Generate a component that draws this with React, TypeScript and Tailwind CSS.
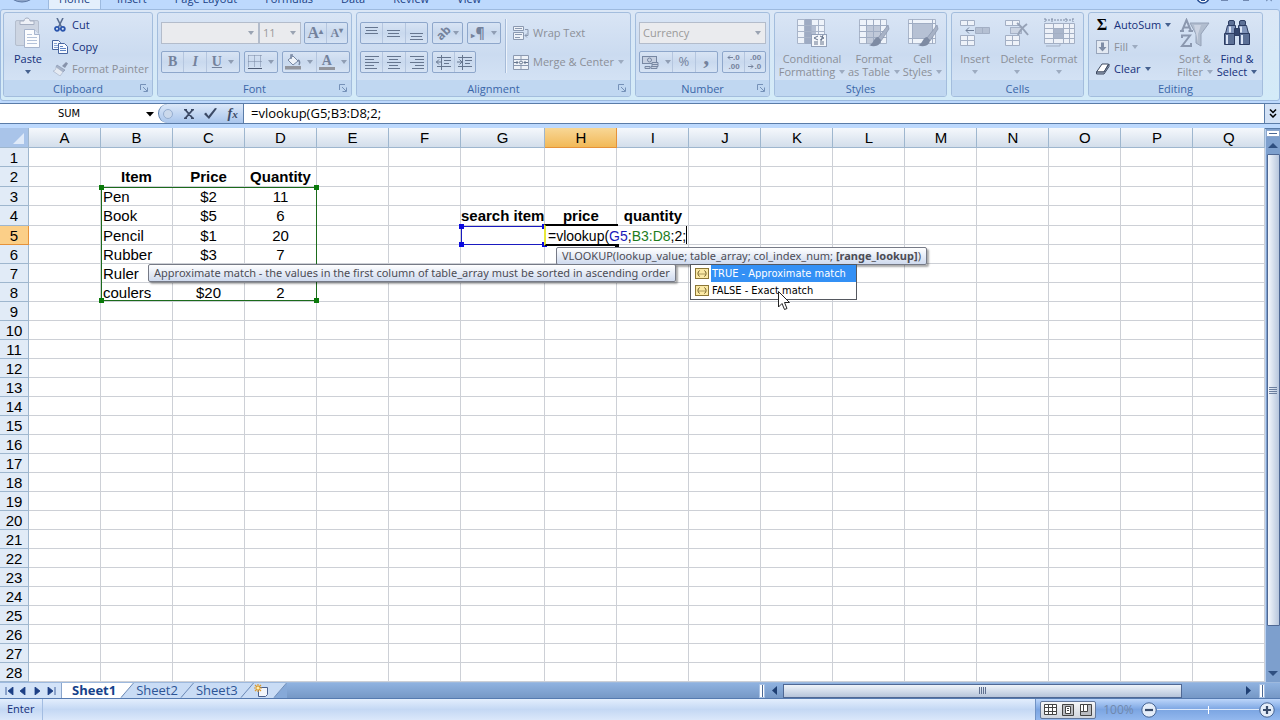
import type { ReactNode } from "react"
import clsx from "clsx"

const tabs = ["Insert", "Page Layout", "Formulas", "Data", "Review", "View"]

const columns = "ABCDEFGHIJKLMNOPQ".split("")

// every row is 19px high except these
const tallRows = [2, 4]

const cells: Record<string, { text: string; style: string }> = {
    B2: { text: "Item", style: "text-center font-bold" },
    C2: { text: "Price", style: "text-center font-bold" },
    D2: { text: "Quantity", style: "text-center font-bold" },
    B3: { text: "Pen", style: "pl-0.5" },
    C3: { text: "$2", style: "text-center" },
    D3: { text: "11", style: "text-center" },
    B4: { text: "Book", style: "pl-0.5" },
    C4: { text: "$5", style: "text-center" },
    D4: { text: "6", style: "text-center" },
    B5: { text: "Pencil", style: "pl-0.5" },
    C5: { text: "$1", style: "text-center" },
    D5: { text: "20", style: "text-center" },
    B6: { text: "Rubber", style: "pl-0.5" },
    C6: { text: "$3", style: "text-center" },
    D6: { text: "7", style: "text-center" },
    B7: { text: "Ruler", style: "pl-0.5" },
    B8: { text: "coulers", style: "pl-0.5" },
    C8: { text: "$20", style: "text-center" },
    D8: { text: "2", style: "text-center" },
    G4: { text: "search item", style: "text-center font-bold" },
    H4: { text: "price", style: "text-center font-bold" },
    I4: { text: "quantity", style: "text-center font-bold" },
}

const Arrow = ({ className = "text-[#8f9db3]" }: { className?: string }) => (
    <svg width="6" height="4" viewBox="0 0 6 4" className={clsx("shrink-0", className)}>
        <path d="M0 0h6L3 4z" fill="currentColor" />
    </svg>
)

const Group = ({ title, width, launcher, children }: { title: string; width: string; launcher?: boolean; children: ReactNode }) => (
    <section className={clsx("flex shrink-0 flex-col overflow-hidden rounded-[3px] border border-[#a3bddd] bg-linear-to-b from-[#d9e5f5] via-[#cbdbf0] to-[#d8e6f7]", width)}>
        <div className="min-h-0 flex-1">{children}</div>
        <div className="relative h-4 bg-[#c0d7f1] text-center leading-[17px] text-[#3a66a8]">
            {title}
            {launcher && (
                <button aria-label={title + " options"} className="absolute top-1 right-1">
                    <svg width="8" height="8" viewBox="0 0 8 8" fill="none" stroke="#7591b8">
                        <path d="M.5 6V.5H6M3 3l4 4M7.5 3.500v4h-4" />
                    </svg>
                </button>
            )}
        </div>
    </section>
)

const Box = ({ width, children }: { width: string; children: ReactNode }) => (
    <div className={clsx("flex h-[22px] shrink-0 divide-x divide-[#b5c6df] overflow-hidden rounded-[2px] border border-[#8ea7cb] bg-linear-to-b from-[#d8e4f4] via-[#c9d9ee] to-[#d6e3f4]", width)}>{children}</div>
)

const Tool = ({ label, wide, children }: { label: string; wide?: boolean; children: ReactNode }) => (
    <button aria-label={label} className={clsx("flex h-full items-center justify-center gap-1.5 text-[#74829c]", wide ? "flex-[1.5]" : "flex-1")}>{children}</button>
)

const Combo = ({ label, value, width }: { label: string; value: string; width: string }) => (
    <div className={clsx("relative h-[22px] shrink-0 border border-[#b3bccb] bg-[#eaebee]", width)}>
        <select aria-label={label} className="block h-full w-full appearance-none pl-[3px] leading-5 text-[#9a9a9a]">
            <option>{value}</option>
        </select>
        <span className="pointer-events-none absolute top-2 right-1"><Arrow className="text-[#9aa3b2]" /></span>
    </div>
)

const Big = ({ icon, top, bottom, width, active }: { icon: ReactNode; top: string; bottom?: string; width: string; active?: boolean }) => (
    <button className={clsx("flex flex-col items-center pt-1 whitespace-nowrap leading-[13px]", width, active ? "text-[#15307a]" : "text-[#8b8f98]")}>
        <span className="mb-[3px] flex h-8 items-center">{icon}</span>
        <span>{top}</span>
        <span className="flex h-[13px] items-center gap-1">
            {bottom}
            <Arrow className={active ? "text-[#46618f]" : "text-[#9dabc0]"} />
        </span>
    </button>
)

const Small = ({ icon, text, arrow, disabled }: { icon: ReactNode; text: string; arrow?: boolean; disabled?: boolean }) => (
    <button className={clsx("flex h-[22px] items-center gap-1 whitespace-nowrap", disabled ? "text-[#8b8f98]" : "text-[#15307a]")}>
        <span className="flex w-4 justify-center">{icon}</span>
        {text}
        {arrow && <Arrow className={disabled ? "text-[#9dabc0]" : "text-[#46618f]"} />}
    </button>
)

const Lines = ({ d }: { d: string }) => (
    <svg width="15" height="15" viewBox="0 0 15 15" stroke="#66768f" fill="none"><path d={d} /></svg>
)

const PasteIcon = () => (
    <svg width="28" height="32" viewBox="0 0 28 32">
        <rect x="1.500" y="3.500" width="23" height="25" rx="1.500" fill="#cdd5e2" stroke="#b4bece" />
        <path d="M6 7.500V4h4c0-4 6-4 6 0h4v3.500z" fill="#eef1f7" stroke="#a5afc2" />
        <path d="M10.500 12.500h10l5 5v13h-15z" fill="#fbfcfe" stroke="#a6b4cd" />
        <path d="M20.500 12.500v5h5" fill="#dde5f2" stroke="#a6b4cd" />
        <path d="M13 17.500h5M13 20.500h10M13 23.500h10M13 26.500h10" stroke="#b4c2d9" />
    </svg>
)

const CutIcon = () => (
    <svg width="12" height="14" viewBox="0 0 12 14" fill="none">
        <path d="M3 0l4.500 9M9 0L4.500 9" stroke="#5b6f92" strokeWidth="1.600" />
        <circle cx="3" cy="10.800" r="2" stroke="#2a55ad" strokeWidth="1.800" />
        <circle cx="8.800" cy="10.800" r="2" stroke="#2a55ad" strokeWidth="1.800" />
    </svg>
)

const CopyIcon = () => (
    <svg width="16" height="14" viewBox="0 0 16 14" stroke="#4866a0" fill="#f7faff">
        <path d="M.5.500h6l2 2v7h-8z" />
        <path d="M2 3.500h3M2 5.500h4M2 7.500h4" stroke="#8aa5d4" />
        <path d="M6.500 3.500h6l3 3v7h-9z" />
        <path d="M8 6.500h3M8 8.500h6M8 10.500h6" stroke="#5f84c4" />
    </svg>
)

const PainterIcon = () => (
    <svg width="15" height="14" viewBox="0 0 15 14">
        <path d="M9 4l4-4 2 1.500L12 6z" fill="#8793ab" />
        <path d="M4 3l8 5-2 2-7-5z" fill="#a8b4c9" stroke="#8492ac" strokeWidth=".6" />
        <path d="M3 5l7 5-3 4-7-5c2 0 3-2 3-4z" fill="#e5eaf2" stroke="#a9b5ca" strokeWidth=".7" />
    </svg>
)

const SheetGrid = ({ children }: { children?: ReactNode }) => (
    <svg width="32" height="30" viewBox="0 0 32 30">
        <path d="M1.500 1.500h27v24h-27z" fill="#eef3fa" stroke="#a9b5c9" />
        {children}
    </svg>
)

const Brush = () => (
    <>
        <path d="M30 7L20 20l3 3 8-12z" fill="#a7b2c6" stroke="#8592aa" strokeWidth=".7" />
        <path d="M20 19c-5 1-4 7-9 8 6 3 12 0 12-5z" fill="#7e8ba3" />
    </>
)

const ConditionalIcon = () => (
    <SheetGrid>
        <path d="M8 1h7v25H8z" fill="#9eabc3" />
        <path d="M15 7h5v12h-5z" fill="#b3bed2" />
        <path d="M1 7.500h28M1 13.500h28M1 19.500h28M8.500 1v25M15.500 1v25M22.500 1v25" stroke="#a9b5c9" />
        <rect x="15.500" y="16.500" width="15" height="12" fill="#f4f7fb" stroke="#92a0b8" />
        <path d="M22 18l-4 2 4 2M18 24h4M18 26h4M24 18l4 2-4 2M24 24h4M24 26h4M27 17l-2 6" stroke="#66748d" fill="none" />
    </SheetGrid>
)

const TableIcon = () => (
    <SheetGrid>
        <path d="M8 7h14v18H8z" fill="#c0c9d9" />
        <path d="M1 7.500h28M1 13.500h28M1 19.500h28M8.500 1v25M15.500 1v25M22.500 1v25" stroke="#a0adc3" fill="none" />
        <Brush />
    </SheetGrid>
)

const StylesIcon = () => (
    <SheetGrid>
        <path d="M5 5h20v15H5z" fill="#b6c1d4" />
        <path d="M1 5.500h28M1 20.500h28M5.500 1v25M25.500 1v25" stroke="#a0adc3" fill="none" />
        <Brush />
    </SheetGrid>
)

const InsertIcon = () => (
    <svg width="30" height="28" viewBox="0 0 30 28" fill="#eef2f9" stroke="#a3afc4">
        <path d="M.5 1.500h14v5H.500zM7.500 1.500v5M.5 16.500h14v5H.500zM.5 21.500h14v5H.500zM7.500 16.500v10" />
        <path d="M15.500 8.500h14v6h-14zM22.500 8.500v6" fill="#b5c0d3" />
        <path d="M14 11.500H6m3-3l-3 3 3 3" fill="none" stroke="#707f99" />
    </svg>
)

const DeleteIcon = () => (
    <svg width="25" height="28" viewBox="0 0 25 28" fill="#eef2f9" stroke="#a3afc4">
        <path d="M.5 1.500h14v5H.500zM7.500 1.500v5M.5 16.500h14v5H.500zM.5 21.500h14v5H.500zM7.500 16.500v10" />
        <path d="M5.500 8.500h11v6h-11z" fill="#cbd4e3" strokeDasharray="1 1" stroke="#7b89a2" />
        <path d="M12 4c4 3 7 7 11 12M22 5c-4 3-7 6-9 11" fill="none" stroke="#96a2b7" strokeWidth="2" />
    </svg>
)

const FormatIcon = () => (
    <svg width="31" height="30" viewBox="0 0 31 30" stroke="#a3afc4" fill="none">
        <path d="M1 2h28M1 0v4M29 0v4M8 0v4M22 0v4" stroke="#7b89a2" strokeDasharray="2 1" />
        <path d="M.5 5.500h30v20H.500z" fill="#edf1f8" />
        <path d="M9 10h10v11H9z" fill="#aab6cb" stroke="none" />
        <path d="M.5 10.500h30M.5 15.500h30M.5 20.500h30M9.500 5.500v20M19.500 5.500v20M25.500 5.500v20M2 28h14v-3" />
    </svg>
)

const FillIcon = () => (
    <svg width="13" height="14" viewBox="0 0 13 14">
        <rect x=".5" y=".5" width="12" height="13" fill="#e3e9f2" stroke="#98a5bb" />
        <path d="M5 2.500h3V7h2.500l-4 4.500L2.500 7H5z" fill="#7f8da6" />
    </svg>
)

const EraserIcon = () => (
    <svg width="15" height="12" viewBox="0 0 15 12">
        <path d="M7 1h6.500L9 9H1.500z" fill="#fff" stroke="#3e4a60" />
        <path d="M1.500 9v2H9l5-7.500V1L9 9z" fill="#a9b6cc" stroke="#3e4a60" />
    </svg>
)

const SortIcon = () => (
    <svg width="30" height="30" viewBox="0 0 30 30">
        <path d="M10 5h19l-8 11v12l-5-3V16z" fill="#b1bdcf" stroke="#95a2b8" />
        <path d="M14 7h7l-3 9v8" fill="#d5dde9" opacity=".7" />
        <g fill="none" stroke="#8b98af" strokeWidth="2">
            <path d="M2 13L6.500 2 11 13M4 9.500h5M0 13h4M8.500 13H13" />
            <path d="M2 20v-2.500h8L2 28h9v-3" />
        </g>
    </svg>
)

const BinocularsIcon = () => (
    <svg width="28" height="26" viewBox="0 0 28 26">
        <g fill="#5c7096" stroke="#2c3c62">
            <rect x="5.500" y=".5" width="6" height="5" rx="1.500" />
            <rect x="16.500" y=".5" width="6" height="5" rx="1.500" />
            <path d="M4.500 5.500h8v8h-10zM15.500 5.500h8l2 8h-10z" fill="#8094ba" />
            <path d="M1.500 13.500h10v11h-10zM16.500 13.500h10v11h-10z" />
            <path d="M11.500 8.500h5v7h-5z" fill="#33456d" />
        </g>
        <path d="M4 15v9M19 15v9M7 6.500v6M18 6.500v6" stroke="#dbe5f7" strokeWidth="2" />
    </svg>
)

const Zone = ({ className, color, size }: { className: string; color: string; size: string }) => (
    <div className={clsx("pointer-events-none absolute border", className)}>
        {["-top-[3px] -left-[3px]", "-top-[3px] -right-[3px]", "-bottom-[3px] -left-[3px]", "-right-[3px] -bottom-[3px]"].map((pos) => (
            <i key={pos} className={clsx("absolute", pos, color, size)} />
        ))}
    </div>
)

const Slash = ({ left, right }: { left: string; right: string }) => (
    <svg width="14" height="15" viewBox="0 0 14 15" className="shrink-0">
        <path d="M0 0h14L1 15H0z" fill={left} />
        <path d="M14 0v15H1z" fill={right} />
        <path d="M13.500 0L1 14.500" stroke="#6f8db8" />
    </svg>
)

const Ribbon = () => (
    <div className="flex h-[92px] shrink-0 gap-1 rounded-[3px] border border-[#9dbadf] bg-linear-to-b from-[#dbe7f6] to-[#d3ebf8] px-0.5 pt-[2px] pb-[3px]">
        <Group title="Clipboard" width="w-[150px]" launcher>
            <div className="flex">
                <Big icon={<PasteIcon />} top="Paste" width="w-[48px]" active />
                <div className="pt-px">
                    <Small icon={<CutIcon />} text="Cut" />
                    <Small icon={<CopyIcon />} text="Copy" />
                    <Small icon={<PainterIcon />} text="Format Painter" disabled />
                </div>
            </div>
        </Group>
        <Group title="Font" width="w-[195px]" launcher>
            <div className="flex flex-col gap-[7px] px-[3px] pt-[9px]">
                <div className="flex">
                    <Combo label="Font name" value="" width="w-[98px]" />
                    <Combo label="Font size" value="11" width="w-[42px]" />
                    <div className="w-1" />
                    <Box width="w-[44px]">
                        <Tool label="Grow font"><b className="font-['Liberation_Serif',serif] text-base">A<sup className="text-[8px]">▴</sup></b></Tool>
                        <Tool label="Shrink font"><b className="font-['Liberation_Serif',serif] text-xs">A<sup className="text-[8px]">▾</sup></b></Tool>
                    </Box>
                </div>
                <div className="flex gap-1 font-['Liberation_Serif',serif] text-sm">
                    <Box width="w-[79px]">
                        <Tool label="Bold"><b>B</b></Tool>
                        <Tool label="Italic"><b className="italic">I</b></Tool>
                        <Tool label="Underline" wide><b className="underline">U</b><Arrow /></Tool>
                    </Box>
                    <Box width="w-[34px]">
                        <Tool label="Borders">
                            <svg width="14" height="14" viewBox="0 0 14 14" stroke="#7787a2" fill="none">
                                <path d="M.5.500h13M.5 6.500h13M.5.500v12M6.500.500v12M12.500.500v12" strokeDasharray="1 1" />
                                <path d="M0 13.500h14" stroke="#4d5b74" />
                            </svg>
                            <Arrow />
                        </Tool>
                    </Box>
                    <Box width="w-[68px]">
                        <Tool label="Fill colour">
                            <svg width="16" height="16" viewBox="0 0 16 16">
                                <path d="M3 6l5-4 5 5-5 4z" fill="#eef2f8" stroke="#7787a2" />
                                <path d="M6 5V1h2M13 6c2 1 2 3 1 5" fill="none" stroke="#7787a2" strokeWidth="1.500" />
                                <path d="M0 12h16v3.500H0z" fill="#92959d" />
                            </svg>
                            <Arrow />
                        </Tool>
                        <Tool label="Font colour">
                            <span className="flex flex-col items-center"><b className="h-3 leading-3">A</b><i className="h-[3px] w-4 bg-[#92959d]" /></span>
                            <Arrow />
                        </Tool>
                    </Box>
                </div>
            </div>
        </Group>
        <Group title="Alignment" width="w-[275px]" launcher>
            <div className="flex px-[3px]">
                <div className="flex flex-col gap-[7px] pt-[9px]">
                    <div className="flex gap-1">
                        <Box width="w-[68px]">
                            <Tool label="Top align"><Lines d="M1 1.500h13M2 4.500h11M1 7.500h13" /></Tool>
                            <Tool label="Middle align"><Lines d="M1 4.500h13M2 7.500h11M1 10.500h13" /></Tool>
                            <Tool label="Bottom align"><Lines d="M1 7.500h13M2 10.500h11M1 13.500h13" /></Tool>
                        </Box>
                        <Box width="w-[31px]">
                            <Tool label="Orientation">
                                <span className="flex items-center gap-0.5"><span className="-rotate-45 text-xs font-bold">ab</span><Arrow /></span>
                            </Tool>
                        </Box>
                        <Box width="w-[34px]">
                            <Tool label="Text direction"><span className="text-sm font-bold"><small className="text-[8px]">▸</small>¶</span><Arrow /></Tool>
                        </Box>
                    </div>
                    <div className="flex gap-1">
                        <Box width="w-[68px]">
                            <Tool label="Align left"><Lines d="M1 1.500h14M1 4.500h9M1 7.500h14M1 10.500h9M1 13.500h12" /></Tool>
                            <Tool label="Centre"><Lines d="M1 1.500h14M3 4.500h9M1 7.500h14M3 10.500h9M2 13.500h12" /></Tool>
                            <Tool label="Align right"><Lines d="M1 1.500h14M6 4.500h9M1 7.500h14M6 10.500h9M3 13.500h12" /></Tool>
                        </Box>
                        <Box width="w-[44px]">
                            <Tool label="Decrease indent"><Lines d="M1 2.500h14M8 5.500h7M8 8.500h5M1 11.500h14M0 7h5M3 4.500L.5 7 3 9.500M5.500 0v15" /></Tool>
                            <Tool label="Increase indent"><Lines d="M1 2.500h14M8 5.500h7M8 8.500h5M1 11.500h14M0 7h5M2.500 4.500L5 7 2.500 9.500M5.500 0v15" /></Tool>
                        </Box>
                    </div>
                </div>
                <div className="mt-1.5 ml-1 h-[54px] w-0.5 border-l border-[#a6bbd8] bg-[#edf3fb]" />
                <div className="ml-1.5 flex flex-col gap-[7px] pt-[9px]">
                    <Small
                        icon={
                            <svg width="16" height="15" viewBox="0 0 16 15" stroke="#8b99b0" fill="#eef2f8">
                                <path d="M.5.500h10v4H.500zM.5 6.500h10v7H.500zM2 2.500h7M2 8.500h7M2 11.500h5" />
                                <path d="M12 3.500h3v6h-3m2-2l-2 2 2 2" fill="none" />
                            </svg>
                        }
                        text="Wrap Text"
                        disabled
                    />
                    <Small
                        icon={
                            <svg width="16" height="15" viewBox="0 0 16 15" stroke="#8b99b0" fill="#eef2f8">
                                <path d="M.5.500h15v14H.500zM.5 4.500h15M.5 10.500h15M8 .500v4M8 10.500v4" />
                                <path d="M1 7.500h4M3.500 6L5 7.500 3.500 9M15 7.500h-4M12.500 6L11 7.500 12.500 9" stroke="#66768f" fill="none" />
                                <circle cx="8" cy="7.500" r="1.500" stroke="#66768f" />
                            </svg>
                        }
                        text="Merge & Center"
                        arrow
                        disabled
                    />
                </div>
            </div>
        </Group>
        <Group title="Number" width="w-[135px]" launcher>
            <div className="flex flex-col gap-[7px] px-[3px] pt-[9px]">
                <Combo label="Number format" value="Currency" width="w-full" />
                <div className="flex gap-1">
                    <Box width="w-[79px]">
                        <Tool label="Accounting format" wide>
                            <svg width="17" height="15" viewBox="0 0 17 15" stroke="#7787a2" fill="#c6d0e1">
                                <rect x=".5" y="1.500" width="14" height="7" />
                                <circle cx="7.500" cy="5" r="2" />
                                <path d="M10 7.500h6v2h-6zM10 9.500h6v2h-6zM9 11.500h6v2H9zM3 11.500h5v2H3z" />
                            </svg>
                            <Arrow />
                        </Tool>
                        <Tool label="Percent style"><span className="text-[13px]">%</span></Tool>
                        <Tool label="Comma style"><b className="-mt-3 font-['Liberation_Serif',serif] text-2xl">,</b></Tool>
                    </Box>
                    <Box width="w-[44px]">
                        <Tool label="Increase decimal">
                            <span className="flex flex-col items-end font-['Liberation_Sans',sans-serif] text-[8px] leading-[9px] font-bold">
                                <span className="flex items-center"><svg width="6" height="5" viewBox="0 0 6 5" fill="none" stroke="currentColor"><path d="M6 2.500H1M3 .5l-2 2 2 2" /></svg>.0</span>
                                <span>.00</span>
                            </span>
                        </Tool>
                        <Tool label="Decrease decimal">
                            <span className="flex flex-col items-end font-['Liberation_Sans',sans-serif] text-[8px] leading-[9px] font-bold">
                                <span>.00</span>
                                <span className="flex items-center"><svg width="6" height="5" viewBox="0 0 6 5" fill="none" stroke="currentColor"><path d="M0 2.500h5M3 .5l2 2-2 2" /></svg>.0</span>
                            </span>
                        </Tool>
                    </Box>
                </div>
            </div>
        </Group>
        <Group title="Styles" width="w-[173px]">
            <div className="flex">
                <Big icon={<ConditionalIcon />} top="Conditional" bottom="Formatting" width="w-[74px]" />
                <Big icon={<TableIcon />} top="Format" bottom="as Table" width="w-[50px]" />
                <Big icon={<StylesIcon />} top="Cell" bottom="Styles" width="w-[47px]" />
            </div>
        </Group>
        <Group title="Cells" width="w-[133px]">
            <div className="flex pl-0.5">
                <Big icon={<InsertIcon />} top="Insert" width="w-[42px]" />
                <Big icon={<DeleteIcon />} top="Delete" width="w-[42px]" />
                <Big icon={<FormatIcon />} top="Format" width="w-[42px]" />
            </div>
        </Group>
        <Group title="Editing" width="w-[175px]">
            <div className="flex">
                <div className="w-[85px] pt-px pl-[5px]">
                    <Small icon={<b className="font-['Liberation_Serif',serif] text-base text-black">Σ</b>} text="AutoSum" arrow />
                    <Small icon={<FillIcon />} text="Fill" arrow disabled />
                    <Small icon={<EraserIcon />} text="Clear" arrow />
                </div>
                <Big icon={<SortIcon />} top="Sort &amp;" bottom="Filter" width="w-[42px]" />
                <Big icon={<BinocularsIcon />} top="Find &amp;" bottom="Select" width="w-[42px]" active />
            </div>
        </Group>
    </div>
)

const FormulaBar = () => (
    <div className="mt-0.5 flex h-[21px] shrink-0 border-y border-[#5a7ca8] bg-white text-black">
        <div className="relative w-[158px]">
            <input aria-label="Name box" defaultValue="SUM" className="h-full w-full pr-5 text-center font-['DejaVu_Sans_Condensed','DejaVu_Sans',sans-serif] text-[11px] outline-none" />
            <span className="absolute top-2 right-1"><svg width="8" height="5" viewBox="0 0 8 5"><path d="M0 0h8L4 4.500z" /></svg></span>
        </div>
        <div className="flex w-[86px] items-center rounded-l-full border-r border-l border-[#5a7ca8] bg-linear-to-b from-[#dce8f8] to-[#a9c5ec]">
            <i className="ml-1 size-2.5 rounded-full border border-[#96aed0] bg-[#cbd9ec]" />
            <div className="flex flex-1 items-center justify-around pl-1.5 text-[#3c4a66]">
                <button aria-label="Cancel">
                    <svg width="10" height="10" viewBox="0 0 10 10" stroke="currentColor" fill="none" strokeWidth="1.800"><path d="M0 .5h3M7 .5h3M1 .5l8 9M9 .5l-8 9M0 9.500h3M7 9.500h3" /></svg>
                </button>
                <button aria-label="Enter">
                    <svg width="13" height="11" viewBox="0 0 13 11"><path d="M0 6l2-1.500L4.500 8 11 0l2 .5L5 11z" fill="currentColor" /></svg>
                </button>
                <button aria-label="Insert function" className="font-['Liberation_Serif',serif] text-sm font-bold italic">f<small>x</small></button>
            </div>
        </div>
        <input aria-label="Formula bar" defaultValue="=vlookup(G5;B3:D8;2;" className="min-w-0 flex-1 pl-[7px] font-['Open_Sans',sans-serif] text-[13px] outline-none" />
        <button aria-label="Expand formula bar" className="flex w-4 items-center justify-center border-l border-[#5a7ca8] bg-[#d3e2f6]">
            <svg width="8" height="9" viewBox="0 0 8 9" fill="none" stroke="#000" strokeWidth="1.500"><path d="M1 .5l3 3 3-3M1 5l3 3 3-3" /></svg>
        </button>
    </div>
)

const Sheet = () => (
    <table className="w-max table-fixed border-separate border-spacing-0 font-['Liberation_Sans',Arial,sans-serif] text-[15px] leading-[17px] text-black">
        <thead>
            <tr className="h-5">
                <th className="h-5 w-[29px] border-r border-b border-[#9eb6ce] bg-[#a9c4e9] p-0">
                    <svg width="11" height="11" viewBox="0 0 11 11" className="mt-px ml-[13px]"><path d="M11 0v11H0z" fill="#dfeaf9" /></svg>
                </th>
                {columns.map((col) => (
                    <th
                        key={col}
                        className={clsx(
                            "h-5 border-r border-b bg-linear-to-b p-0 font-normal",
                            col === "G" ? "w-[84px]" : "w-[72px]",
                            col === "H" ? "border-[#e5923a] from-[#f8d795] to-[#f2b956]" : "border-[#9eb6ce] from-[#f5f8fc] to-[#d3deeb]",
                        )}
                    >
                        {col}
                    </th>
                ))}
            </tr>
        </thead>
        <tbody>
            {Array.from({ length: 28 }, (_, i) => i + 1).map((row) => (
                <tr key={row}>
                    <th
                        className={clsx(
                            "border-r border-b p-0 pt-px text-center align-top font-normal",
                            tallRows.includes(row) ? "h-5" : "h-[19px]",
                            row === 5 ? "border-[#e5923a] bg-[#fbcf88]" : "border-[#9eb6ce] bg-[#e1ebf7]",
                        )}
                    >
                        {row}
                    </th>
                    {columns.map((col) => (
                        <td key={col} className={clsx("border-r border-b border-[#cdd0d6] p-0 pt-px align-top whitespace-nowrap", cells[col + row]?.style)}>
                            {cells[col + row]?.text}
                        </td>
                    ))}
                </tr>
            ))}
        </tbody>
    </table>
)

const HintIcon = () => (
    <svg width="14" height="11" viewBox="0 0 14 11" className="shrink-0">
        <rect x=".5" y=".5" width="13" height="10" fill="#fbe9a5" stroke="#8b7636" />
        <path d="M4.500 2.500c-2 2-2 4 0 6M9.500 2.500c2 2 2 4 0 6M4.500 6h1M6.500 6h1M8.500 6h1" stroke="#5e4c17" fill="none" />
    </svg>
)

const Hint = ({ className, children }: { className: string; children: ReactNode }) => (
    <div
        className={clsx(
            "absolute h-[18px] rounded-[2px] border border-[#767a86] bg-linear-to-b from-white to-[#cfdaee] px-[5px] font-['Noto_Sans',sans-serif] text-[11px] leading-4 whitespace-nowrap text-[#4c4c55] shadow-[2px_2px_2px_#0005]",
            className,
        )}
    >
        {children}
    </div>
)

// selection marks and hints that float over the cells
const Overlays = () => (
    <>
        <Zone className="top-[59px] left-[101px] h-[114px] w-[216px] border-[#1b6b1b]" color="bg-[#0a7a0a]" size="size-[5px]" />
        <Zone className="top-[98px] left-[461px] h-[19px] w-[84px] border-[#1a1ac0]" color="bg-[#0a0ae0]" size="size-[5px]" />
        <div className="absolute top-[96px] left-[544px] h-[22px] w-[74px] border-y-2 border-l-2 border-y-black border-l-[#e8e83a]">
            <i className="absolute -right-px -bottom-[3px] size-1 bg-black" />
        </div>
        <div className="absolute top-[98px] left-[546px] h-[18px] border-r border-black bg-white pl-0.5 font-['Liberation_Sans',Arial,sans-serif] text-sm leading-5 whitespace-nowrap text-black">
            =vlookup(<span className="text-[#1a1ab8]">G5</span>;<span className="text-[#1d7d1d]">B3:D8</span>;2;
        </div>
        <Hint className="top-[119px] left-[556px]">
            VLOOKUP(lookup_value; table_array; col_index_num; <b>[range_lookup]</b>)
        </Hint>
        <Hint className="top-[136px] left-[148px]">
            Approximate match - the values in the first column of table_array must be sorted in ascending order
        </Hint>
        <ul className="absolute top-[136px] left-[690px] w-[167px] border border-[#55585f] bg-white font-['DejaVu_Sans_Condensed','DejaVu_Sans',sans-serif] text-[11px] leading-[17px] text-black">
            <li className="flex items-center gap-0.5 pl-1"><HintIcon /><span className="flex-1 bg-[#3390f5] pl-px text-white">TRUE - Approximate match</span></li>
            <li className="flex items-center gap-0.5 pl-1"><HintIcon /><span className="flex-1 pl-px">FALSE - Exact match</span></li>
        </ul>
        <svg width="12" height="20" viewBox="0 0 12 20" className="absolute top-[163px] left-[778px]">
            <path d="M.5.500v15.500l3.500-3.500 2.500 6 2.500-1-2.500-6h5z" fill="#fff" stroke="#222" />
        </svg>
    </>
)

const VerticalScroll = () => (
    <div className="flex min-w-[15px] flex-1 flex-col items-center border-l border-[#b9d0f0] bg-[#7d9fcd]">
        <div className="mt-px flex h-[7px] w-full items-center border border-[#8ba6cc] bg-white"><i className="mx-auto h-px w-2 bg-[#4b6894]" /></div>
        <button aria-label="Scroll up" className="flex h-[17px] w-full items-center justify-center"><svg width="10" height="5" viewBox="0 0 10 5"><path d="M5 0l5 5H0z" fill="#2f4f80" /></svg></button>
        <div className="flex w-[13px] flex-1 flex-col items-center justify-center gap-px rounded-[1px] border border-[#4f6894] bg-linear-to-r from-[#f3f7fc] to-[#b7c6dd]">
            {[0, 1, 2, 3].map((n) => <i key={n} className="h-px w-2 bg-[#6c7f9f]" />)}
        </div>
        <button aria-label="Scroll down" className="flex h-14 w-full items-end justify-center pb-1.5"><svg width="10" height="5" viewBox="0 0 10 5"><path d="M0 0h10L5 5z" fill="#2f4f80" /></svg></button>
    </div>
)

const SheetTabs = () => (
    <div className="flex h-4 shrink-0 border-t border-[#9db9de] bg-linear-to-b from-[#8fb2e0] to-[#7698c6] text-[13px] leading-[15px]">
        <div className="flex w-[62px] items-center justify-around border-r border-[#8ba6cc] bg-[#d3e3f8] px-0.5">
            {["M1 0v8M8 0v8L3 4z", "M6 0v8L1 4z", "M2 0v8l5-4z", "M1 0v8l5-4zM8 0v8"].map((d, i) => (
                <button key={d} aria-label={["First sheet", "Previous sheet", "Next sheet", "Last sheet"][i]}>
                    <svg width="9" height="8" viewBox="0 0 9 8" fill="#1d3f85" stroke="#1d3f85" strokeWidth=".8"><path d={d} /></svg>
                </button>
            ))}
        </div>
        <button className="bg-white pr-1 pl-2.5 font-bold text-[#15428b]">Sheet1</button>
        <Slash left="#fff" right="#c9dcf5" />
        <button className="bg-[#c9dcf5] px-0.5 text-[#2d5596]">Sheet2</button>
        <Slash left="#c9dcf5" right="#c9dcf5" />
        <button className="bg-[#c9dcf5] px-0.5 text-[#2d5596]">Sheet3</button>
        <Slash left="#c9dcf5" right="#c9dcf5" />
        <button aria-label="Insert worksheet" className="bg-[#c9dcf5] pr-1">
            <svg width="15" height="14" viewBox="0 0 15 14">
                <path d="M4.500 3.500h9v7l-2 2h-7z" fill="#f1f5fb" stroke="#4a618f" />
                <path d="M4 0v8M0 4h8M1 1l6 6M7 1L1 7" stroke="#dd9a2c" strokeWidth="1.200" />
                <circle cx="4" cy="4" r="1.500" fill="#fff0b0" />
            </svg>
        </button>
        <Slash left="#c9dcf5" right="#86a9d8" />
        <div className="flex-1" />
        <div className="flex w-[506px] items-center">
            <i className="h-3.5 w-1.5 border border-[#a9c2e4] bg-white"><i className="mx-auto block h-full w-px bg-[#4b6894]" /></i>
            <button aria-label="Scroll left" className="flex w-[18px] justify-center"><svg width="5" height="9" viewBox="0 0 5 9"><path d="M5 0v9L0 4.500z" fill="#1f3f73" /></svg></button>
            <div className="flex h-3.5 flex-1 items-center justify-center gap-px border border-[#4f6894] bg-linear-to-b from-[#eff4fa] to-[#b6c4da]">
                {[0, 1, 2, 3].map((n) => <i key={n} className="h-[7px] w-px bg-[#5f7090]" />)}
            </div>
            <button aria-label="Scroll right" className="flex w-[77px] justify-end pr-2"><svg width="5" height="9" viewBox="0 0 5 9"><path d="M0 0v9l5-4.500z" fill="#1f3f73" /></svg></button>
            <i className="h-3.5 w-1.5 border border-[#a9c2e4] bg-white"><i className="mx-auto block h-full w-px bg-[#4b6894]" /></i>
        </div>
        <div className="w-[15px]" />
    </div>
)

const StatusBar = () => (
    <footer className="flex h-[22px] shrink-0 border-t border-[#557ab0] bg-linear-to-b from-[#e3eefd] via-[#c4d8f4] to-[#dbe8fa] text-[#15307a]">
        <div className="w-[43px] border-r border-[#a3bde2] pl-[7px] leading-5">Enter</div>
        <div className="flex-1" />
        <div className="flex w-[245px] items-center border-l border-[#7092c4] bg-linear-to-b from-[#bdd6fa] via-[#7ba5e2] to-[#93b8ee] pl-1">
            <div className="flex h-[18px] w-[56px] items-center justify-around rounded-[2px] border border-[#62779b] bg-linear-to-b from-[#f6f7f9] to-[#d0d5dd]">
                <button aria-label="Normal view"><svg width="13" height="11" viewBox="0 0 13 11" fill="#fff" stroke="#444"><path d="M.5.500h12v10H.500zM.5 3.500h12M.5 7.500h12M4.500.500v10M8.500.500v10" /></svg></button>
                <button aria-label="Page layout view"><svg width="12" height="12" viewBox="0 0 12 12" fill="#b9bbc0" stroke="#444"><path d="M.5.500h11v11H.500z" /><path d="M3.500 2.500h5v7h-5z" fill="#fff" /><path d="M5 4.500h2M5 6.500h2" /></svg></button>
                <button aria-label="Page break view"><svg width="12" height="12" viewBox="0 0 12 12" fill="#b9bbc0" stroke="#444"><path d="M.5.500h11v11H.500z" /><path d="M.5.500h3v7h-3zM3.500.500h4v7h-4z" fill="#fff" /></svg></button>
            </div>
            <button className="w-[45px] text-center text-xs text-[#7088ad]">100%</button>
            <button aria-label="Zoom out"><svg width="16" height="16" viewBox="0 0 16 16"><circle cx="8" cy="8" r="7.200" fill="#e4edf9" stroke="#456392" /><path d="M4 8h8" stroke="#394c6b" strokeWidth="2.200" /></svg></button>
            <div className="flex h-full flex-1 items-center justify-center bg-[linear-gradient(#dce9fb,#dce9fb)] bg-[length:100%_1px] bg-center bg-no-repeat"><i className="h-2 w-px bg-white" /></div>
            <button aria-label="Zoom in" className="mr-[5px]"><svg width="16" height="16" viewBox="0 0 16 16"><circle cx="8" cy="8" r="7.200" fill="#e4edf9" stroke="#456392" /><path d="M4 8h8M8 4v8" stroke="#394c6b" strokeWidth="2.200" /></svg></button>
        </div>
    </footer>
)

export default function App() {
    return (
        <div className="flex h-screen flex-col overflow-hidden bg-[#bdd9fd] font-['Open_Sans','Noto_Sans',sans-serif] text-[11px]">
            <nav className="flex h-[9px] shrink-0 items-end overflow-hidden leading-4 text-[#1a3f85]">
                <svg width="48" height="9" viewBox="0 0 48 9"><ellipse cx="22" cy="-6" rx="12" ry="8" fill="#8fa6c9" stroke="#5f7aa5" /></svg>
                <button className="mr-0.5 border-x border-[#9dbadf] bg-[#e4effc] px-2.5 pb-0.5">Home</button>
                {tabs.map((tab) => (
                    <button key={tab} className="px-3.5 pb-0.5 whitespace-nowrap">{tab}</button>
                ))}
                <svg width="84" height="9" viewBox="0 0 84 9" fill="none" className="ml-auto" stroke="#7189b1">
                    <circle cx="7" cy="-3" r="6" stroke="#284f93" strokeWidth="1.500" fill="#fff" />
                    <path d="M5 0h4" stroke="#284f93" strokeWidth="2" />
                    <path d="M25 .5h7M47 .5h6M70 1l3-2 3 2" />
                </svg>
            </nav>
            <Ribbon />
            <FormulaBar />
            <main className="mt-1 flex min-h-0 flex-1 border-t border-[#5a7ca8]">
                <div className="relative -mt-px overflow-hidden bg-white">
                    <Sheet />
                    <Overlays />
                </div>
                <VerticalScroll />
            </main>
            <SheetTabs />
            <StatusBar />
        </div>
    )
}
